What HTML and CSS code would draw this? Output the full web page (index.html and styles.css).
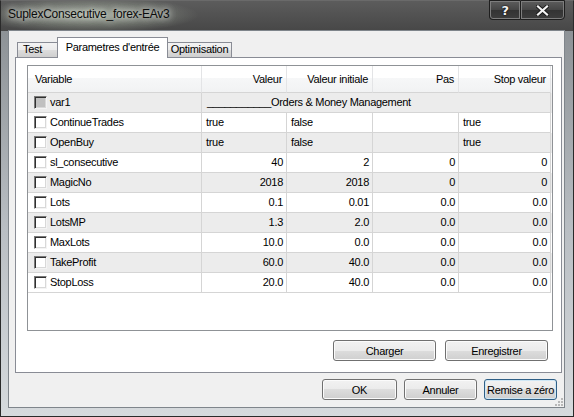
FILE: index.html
```html
<!DOCTYPE html>
<html>
<head>
<meta charset="utf-8">
<title>SuplexConsecutive_forex-EAv3</title>
<link rel="stylesheet" href="styles.css">
</head>
<body>
<div class="window">
  <div class="titlebar">
    <span class="title">SuplexConsecutive_forex-EAv3</span>
    <div class="caption-btns">
      <div class="cbtn help">?</div>
      <div class="cbtn close">
        <svg width="13" height="11" viewBox="0 0 13 11"><path d="M2 1.5 L11 9.5 M11 1.5 L2 9.5" stroke="#1a1a1a" stroke-width="4" stroke-linecap="square"/><path d="M2 1.5 L11 9.5 M11 1.5 L2 9.5" stroke="#f4f4f4" stroke-width="2.2" stroke-linecap="square"/></svg>
      </div>
    </div>
  </div>
  <div class="client">
    <div class="tabs">
      <div class="tab tab-test">Test</div>
      <div class="tab active">Parametres d'entrée</div>
      <div class="tab tab-opt">Optimisation</div>
    </div>
    <div class="panel">
      <div class="list">
        <div class="row head">
          <div class="cell hl">Variable</div>
          <div class="cell num">Valeur</div>
          <div class="cell num">Valeur initiale</div>
          <div class="cell num">Pas</div>
          <div class="cell num">Stop valeur</div>
        </div>
        <div class="row alt">
          <div class="cell var"><span class="cb cb-gray"></span>var1</div>
          <div class="cell span">___________Orders &amp; Money Management</div>
        </div>
        <div class="row">
          <div class="cell var"><span class="cb"></span>ContinueTrades</div>
          <div class="cell">true</div>
          <div class="cell">false</div>
          <div class="cell"></div>
          <div class="cell">true</div>
        </div>
        <div class="row alt">
          <div class="cell var"><span class="cb"></span>OpenBuy</div>
          <div class="cell">true</div>
          <div class="cell">false</div>
          <div class="cell"></div>
          <div class="cell">true</div>
        </div>
        <div class="row">
          <div class="cell var"><span class="cb"></span>sl_consecutive</div>
          <div class="cell num">40</div>
          <div class="cell num">2</div>
          <div class="cell num">0</div>
          <div class="cell num">0</div>
        </div>
        <div class="row alt">
          <div class="cell var"><span class="cb"></span>MagicNo</div>
          <div class="cell num">2018</div>
          <div class="cell num">2018</div>
          <div class="cell num">0</div>
          <div class="cell num">0</div>
        </div>
        <div class="row">
          <div class="cell var"><span class="cb"></span>Lots</div>
          <div class="cell num">0.1</div>
          <div class="cell num">0.01</div>
          <div class="cell num">0.0</div>
          <div class="cell num">0.0</div>
        </div>
        <div class="row alt">
          <div class="cell var"><span class="cb"></span>LotsMP</div>
          <div class="cell num">1.3</div>
          <div class="cell num">2.0</div>
          <div class="cell num">0.0</div>
          <div class="cell num">0.0</div>
        </div>
        <div class="row">
          <div class="cell var"><span class="cb"></span>MaxLots</div>
          <div class="cell num">10.0</div>
          <div class="cell num">0.0</div>
          <div class="cell num">0.0</div>
          <div class="cell num">0.0</div>
        </div>
        <div class="row alt">
          <div class="cell var"><span class="cb"></span>TakeProfit</div>
          <div class="cell num">60.0</div>
          <div class="cell num">40.0</div>
          <div class="cell num">0.0</div>
          <div class="cell num">0.0</div>
        </div>
        <div class="row">
          <div class="cell var"><span class="cb"></span>StopLoss</div>
          <div class="cell num">20.0</div>
          <div class="cell num">40.0</div>
          <div class="cell num">0.0</div>
          <div class="cell num">0.0</div>
        </div>
      </div>
      <div class="panel-btns">
        <button class="btn btn-wide">Charger</button>
        <button class="btn btn-wide">Enregistrer</button>
      </div>
    </div>
    <div class="dlg-btns">
      <button class="btn btn-ok">OK</button>
      <button class="btn btn-cancel">Annuler</button>
      <button class="btn btn-reset">Remise a zéro</button>
    </div>
    <svg class="grip" width="9" height="9" viewBox="0 0 9 9">
      <g fill="#b8b8b8">
        <rect x="6" y="0" width="2" height="2"/>
        <rect x="3" y="3" width="2" height="2"/><rect x="6" y="3" width="2" height="2"/>
        <rect x="0" y="6" width="2" height="2"/><rect x="3" y="6" width="2" height="2"/><rect x="6" y="6" width="2" height="2"/>
      </g>
    </svg>
  </div>
</div>
</body>
</html>
```
FILE: styles.css
```css
* { box-sizing: border-box; }
html, body { margin: 0; padding: 0; }
body {
  width: 574px;
  height: 417px;
  overflow: hidden;
  font-family: "Liberation Sans", Arial, sans-serif;
  font-size: 11px;
  letter-spacing: -0.3px;
  color: #000;
  background: #3c3c3c;
}
.window {
  width: 574px;
  height: 417px;
  display: flex;
  flex-direction: column;
  padding: 0 8px 8px 7px;
  background:
    radial-gradient(ellipse 110px 18px at 88px 14px, rgba(215,230,205,0.55), rgba(215,230,205,0) 100%),
    linear-gradient(to bottom, #5c5c5c 0px, #474747 30px, #8d9296 30px, #b9bec3 55%, #d6dadd 100%);
  border: 1px solid #2a2a2a;
  border-top-color: #6a6a6a;
}
.titlebar {
  height: 29px;
  display: flex;
  align-items: flex-start;
  flex-shrink: 0;
}
.title {
  margin-top: 6px;
  font-size: 12px;
  line-height: 15px;
  letter-spacing: -0.25px;
  color: #0b0b0b;
  text-shadow: 0 0 6px rgba(255,255,255,0.9), 0 0 10px rgba(235,245,230,0.8);
}
.caption-btns {
  margin-left: auto;
  margin-right: 0;
  margin-top: -1px;
  display: flex;
}
.cbtn {
  height: 20px;
  display: flex;
  align-items: center;
  justify-content: center;
  border: 1px solid #1e1e1e;
  box-shadow: inset 0 0 0 1px #7d7d7d;
  background: linear-gradient(to bottom, #5d5d5d 0%, #454545 50%, #333333 50%, #3d3d3d 100%);
  color: #f4f4f4;
}
.help {
  width: 31px;
  border-radius: 0 0 0 4px;
  border-right: none;
  font-family: "DejaVu Sans", sans-serif;
  font-weight: bold;
  font-size: 13px;
  text-shadow: 0 0 2px #000, 0 0 1px #000;
}
.close {
  width: 45px;
  border-radius: 0 0 4px 0;
}
.client {
  flex: 1;
  position: relative;
  background: #f0f0f0;
  border: 1px solid #7f858b;
  padding-top: 6px;
  display: flex;
  flex-direction: column;
}
.tabs {
  display: flex;
  align-items: flex-end;
  height: 20px;
  margin-left: 8px;
}
.tab {
  height: 15px;
  border: 1px solid #898c95;
  border-bottom: none;
  background: linear-gradient(to bottom, #f3f3f3 0%, #ebebeb 50%, #dddddd 50%, #cfcfcf 100%);
  line-height: 13px;
  text-align: center;
  white-space: nowrap;
}
.tab-test {
  width: 41px;
  padding-left: 5px;
  text-align: left;
  margin-right: -1px;
}
.tab-opt {
  width: 65px;
  margin-left: -1px;
}
.tab.active {
  position: relative;
  z-index: 1;
  width: 111px;
  height: 21px;
  margin-bottom: -1px;
  background: #ffffff;
  padding-top: 3px;
}
.panel {
  margin-left: 6px;
  width: 547px;
  height: 316px;
  border: 1px solid #898c95;
  background: #ffffff;
  padding: 7px 0 0 11px;
  display: flex;
  flex-direction: column;
}
.list {
  width: 526px;
  height: 266px;
  border: 1px solid #8f9296;
  background: #fff;
  flex-shrink: 0;
}
.row {
  display: grid;
  grid-template-columns: 174px 85px 86px 86px 92px;
  height: 20px;
}
.row.alt { background: #ececec; }
.row.head {
  height: 27px;
  background: linear-gradient(to bottom, #ffffff 0%, #ffffff 45%, #f6f7f8 45%, #f1f2f3 100%);
}
.cell {
  border-right: 1px solid #d5d5d5;
  border-bottom: 1px solid #d5d5d5;
  padding: 0 4px;
  line-height: 19px;
  white-space: nowrap;
  overflow: hidden;
}
.head .cell {
  line-height: 26px;
  border-right-color: #e3e4e6;
  border-bottom-color: #d5d5d5;
}
.head .cell.hl { padding-left: 7px; }
.head .cell.num { padding-right: 4px; }
.num { text-align: right; padding-right: 3px; }
.cell.span {
  grid-column: 2 / 6;
  padding-left: 5px;
}
.cell.var {
  display: flex;
  align-items: center;
  gap: 3px;
  padding-left: 6px;
}
.cb {
  width: 13px;
  height: 13px;
  flex-shrink: 0;
  background: #ffffff;
  border: 1px solid;
  border-color: #7a7a7a #f4f4f4 #f4f4f4 #7a7a7a;
  box-shadow: inset 1px 1px 0 #303030, inset -1px -1px 0 #d8d8d8;
}
.cb-gray { background: #c0c0c0; }
.panel-btns {
  display: flex;
  justify-content: flex-end;
  gap: 9px;
  margin-top: 9px;
  margin-right: 13px;
}
.btn {
  height: 21px;
  padding: 0;
  margin: 0;
  font-family: "Liberation Sans", Arial, sans-serif;
  font-size: 11px;
  letter-spacing: -0.3px;
  color: #000;
  border: 1px solid #707070;
  border-radius: 3px;
  background: linear-gradient(to bottom, #f2f2f2 0%, #ebebeb 50%, #dddddd 50%, #cfcfcf 100%);
  box-shadow: inset 0 0 0 1px #fbfbfb;
}
.btn-wide { width: 103px; }
.dlg-btns {
  display: flex;
  justify-content: flex-end;
  gap: 7px;
  margin-top: 6px;
  margin-right: 7px;
}
.btn-ok { width: 75px; }
.btn-cancel { width: 73px; }
.btn-reset {
  width: 73px;
  border-color: #2f5f86;
  box-shadow: inset 0 0 0 1px #cfe7f5;
}
.grip {
  position: absolute;
  right: 0;
  bottom: 0;
}
```
